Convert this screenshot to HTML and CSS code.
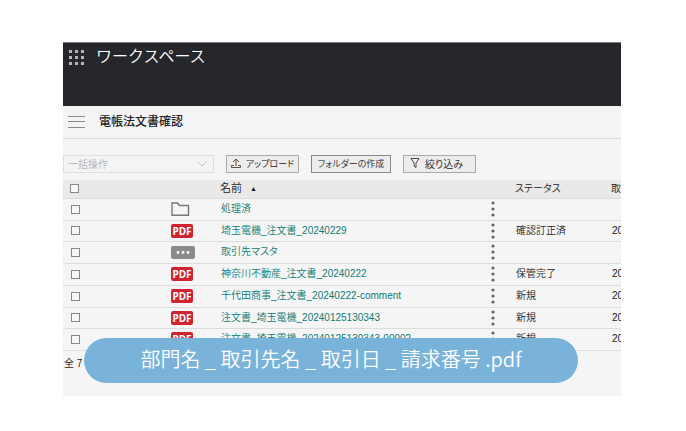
FILE: index.html
```html
<!DOCTYPE html>
<html lang="ja">
<head>
    <meta charset="UTF-8">
    <meta name="viewport" content="width=device-width, initial-scale=1.0">
    <title>ワークスペース</title>
    <link rel="stylesheet" href="styles.css">
</head>
<body>
    <main class="workspace">
        <header class="app-bar">
            <button class="icon-button" aria-label="アプリ一覧">
                <svg width="16" height="16" viewBox="0 0 16 16" fill="#b4b5b9">
                    <path d="M0 1h3v3H0zM6 1h3v3H6zM12 1h3v3h-3zM0 7h3v3H0zM6 7h3v3H6zM12 7h3v3h-3zM0 13h3v3H0zM6 13h3v3H6zM12 13h3v3h-3z"/>
                </svg>
            </button>
            <h1>ワークスペース</h1>
        </header>

        <div class="title-bar">
            <button class="icon-button" aria-label="メニュー">
                <svg width="17" height="12" viewBox="0 0 17 12" stroke="#8c8c8c">
                    <path d="M0 .5h17M0 5.5h17M0 11.5h17"/>
                </svg>
            </button>
            <h2>電帳法文書確認</h2>
        </div>

        <div class="toolbar">
            <div class="bulk">
                <select aria-label="一括操作" disabled>
                    <option>一括操作</option>
                </select>
                <svg class="chevron" width="10" height="6" viewBox="0 0 10 6" fill="none" stroke="#c4c4c4">
                    <path d="M.5.5 5 5 9.500.5"/>
                </svg>
            </div>
            <button class="tool upload">
                <svg width="10" height="10" viewBox="0 0 10 10" fill="none" stroke="#555">
                    <path d="M3 7.500H.5v2h9v-2H7M5 8V1M2 4l3-3 3 3"/>
                    <path d="M5 3v4" stroke="#c98a45"/>
                </svg>
                <span>アップロード</span>
            </button>
            <button class="tool create"><span>フォルダーの作成</span></button>
            <button class="tool filter">
                <svg width="10" height="10" viewBox="0 0 10 10" fill="none" stroke="#5c3d50">
                    <path d="M1 .5h8L6 5v4.500L4 8V5z"/>
                </svg>
                <span>絞り込み</span>
            </button>
        </div>

        <div class="table-wrap">
            <table class="files">
                <colgroup>
                    <col class="col-check">
                    <col class="col-icon">
                    <col>
                    <col class="col-menu">
                    <col class="col-status">
                    <col class="col-date">
                </colgroup>
                <thead>
                    <tr>
                        <th><input type="checkbox" aria-label="すべて選択"></th>
                        <th></th>
                        <th class="name">名前<span class="sort">▲</span></th>
                        <th></th>
                        <th>ステータス</th>
                        <th>取引日</th>
                    </tr>
                </thead>
                <tbody id="rows"></tbody>
            </table>
        </div>

        <footer class="count">全 7</footer>

        <div class="callout">部門名 _ 取引先名 _ 取引日 _ 請求番号 .pdf</div>
    </main>

    <script src="script.js"></script>
</body>
</html>
```
FILE: styles.css
```css
* {
    box-sizing: border-box;
}
body {
    margin: 0;
    padding: 42px 65px 34px 63px;
    background: #fff;
    color: #222;
    font-family: "Liberation Sans", "Noto Sans CJK JP", sans-serif;
    font-size: 10px;
    font-weight: 350;
    font-feature-settings: "palt";
}
button, select, input {
    font: inherit;
    color: inherit;
    margin: 0;
}
svg {
    display: block;
}
.workspace {
    position: relative;
    background: #f5f5f5;
    overflow: hidden;
}
.icon-button {
    display: block;
    padding: 0;
    border: none;
    background: none;
}

/* header */
.app-bar {
    display: flex;
    align-items: flex-start;
    gap: 11px;
    height: 64px;
    padding: 6px 6px 0;
    border-top: 1px solid #77797d;
    background: #26272d;
}
.app-bar h1 {
    margin: 0;
    color: #fff;
    font-family: "Noto Sans CJK JP", sans-serif;
    font-size: 16px;
    font-weight: 350;
    line-height: 13px;
    font-feature-settings: normal;
}
.title-bar {
    display: flex;
    align-items: center;
    gap: 14px;
    height: 33px;
    padding: 0 5px;
    border-bottom: 1px solid #dadada;
    background: #f4f4f4;
}
.title-bar h2 {
    margin: 0;
    color: #222;
    font-size: 12px;
    font-weight: 500;
    line-height: 16px;
}

/* toolbar */
.toolbar {
    display: flex;
    gap: 12px;
    padding: 16px 0 7px;
}
.bulk {
    position: relative;
    width: 151px;
}
.bulk select {
    appearance: none;
    width: 100%;
    height: 18px;
    padding: 0 4px;
    border: 1px solid #dedede;
    border-radius: 0;
    background: #f4f4f4;
    color: #b0b0b0;
    opacity: 1;
}
.chevron {
    position: absolute;
    top: 6px;
    right: 7px;
}
.tool {
    display: flex;
    align-items: center;
    justify-content: center;
    gap: 5px;
    width: 73px;
    height: 18px;
    padding: 0 0 2px;
    border: 1px solid #aaa;
    background: #ececec;
    white-space: nowrap;
}
.upload {
    font-size: 9px;
}
.create {
    width: 80px;
    border-color: #888;
    font-size: 9px;
}
.filter {
    padding-right: 6px;
}

/* file list */
.table-wrap {
    overflow: hidden;
}
.files {
    width: calc(100% + 60px);
    table-layout: fixed;
    border-collapse: collapse;
}
.col-check {
    width: 107px;
}
.col-icon {
    width: 50px;
}
.col-menu {
    width: 25px;
}
.col-status {
    width: 96px;
}
.col-date {
    width: 70px;
}
.files th, .files td {
    padding: 0 0 2px;
    line-height: 16px;
    text-align: left;
    vertical-align: middle;
    white-space: nowrap;
    box-shadow: inset 0 -1px #dcdcdc;
}
.files th {
    height: 19px;
    background: #e9e9e9;
    font-weight: 350;
}
.files th.name {
    font-size: 11px;
}
.files td {
    height: 22px;
    padding-left: 1px;
}
.files tbody tr:nth-child(4n+2) td {
    height: 21px;
}
.files input {
    appearance: none;
    display: block;
    width: 9px;
    height: 9px;
    margin-left: 7px;
    border: 1px solid #888;
    background: #f7f7f7;
}
.files a {
    color: #0f7b74;
    text-decoration: none;
}
.sort {
    margin-left: 8px;
    color: #111;
    font-family: "DejaVu Sans", sans-serif;
    font-size: 7px;
    vertical-align: 1px;
}
.badge {
    display: flex;
    align-items: center;
    justify-content: center;
    width: 22px;
    height: 14px;
    border-radius: 2px;
    background: #cf2430;
    color: #fff;
    font-family: "Open Sans", sans-serif;
    font-size: 10px;
    font-weight: 700;
    line-height: 14px;
}
.badge.other {
    width: 24px;
    height: 13px;
    background: #8b8b8b;
}
.count {
    height: 45px;
    padding: 5px 1px;
    line-height: 16px;
}

/* file name rule shown over the list */
.callout {
    position: absolute;
    right: 43px;
    bottom: 13px;
    left: 21px;
    padding-bottom: 4px;
    border-radius: 23px;
    background: #7ab3d9;
    color: #fff;
    font-family: "Noto Sans CJK JP", sans-serif;
    font-size: 20px;
    line-height: 41px;
    text-align: center;
    white-space: nowrap;
    font-feature-settings: normal;
}
```
FILE: script.js
```javascript
const files = [
    { type: 'folder', name: '処理済', status: '', date: '' },
    { type: 'pdf', name: '埼玉電機_注文書_20240229', status: '確認訂正済', date: '2024/02/29' },
    { type: 'other', name: '取引先マスタ', status: '', date: '' },
    { type: 'pdf', name: '神奈川不動産_注文書_20240222', status: '保管完了', date: '2024/02/22' },
    { type: 'pdf', name: '千代田商事_注文書_20240222-comment', status: '新規', date: '2024/02/22' },
    { type: 'pdf', name: '注文書_埼玉電機_20240125130343', status: '新規', date: '2024/01/25' },
    { type: 'pdf', name: '注文書_埼玉電機_20240125130343-00002', status: '新規', date: '2024/01/25' }
];

const icons = {
    folder: `<svg width="19" height="14" viewBox="0 0 19 14" fill="none" stroke="#777" stroke-width="1.4">
        <path d="M1 1h5.500l2 2.500h9V13.300H1z"/></svg>`,
    pdf: `<span class="badge">PDF</span>`,
    other: `<span class="badge other"><svg width="14" height="3" viewBox="0 0 14 3" fill="#fff">
        <circle cx="2" cy="1.500" r="1.400"/><circle cx="7" cy="1.500" r="1.400"/><circle cx="12" cy="1.500" r="1.400"/></svg></span>`
};

document.getElementById('rows').innerHTML = files.map(file => `
    <tr>
        <td><input type="checkbox" aria-label="${file.name}"></td>
        <td>${icons[file.type]}</td>
        <td><a href="#">${file.name}</a></td>
        <td>
            <button class="icon-button" aria-label="操作">
                <svg width="4" height="16" viewBox="0 0 4 16" fill="#666">
                    <circle cx="2" cy="2" r="1.600"/><circle cx="2" cy="8" r="1.600"/><circle cx="2" cy="14" r="1.600"/>
                </svg>
            </button>
        </td>
        <td>${file.status}</td>
        <td>${file.date}</td>
    </tr>
`).join('');
```
